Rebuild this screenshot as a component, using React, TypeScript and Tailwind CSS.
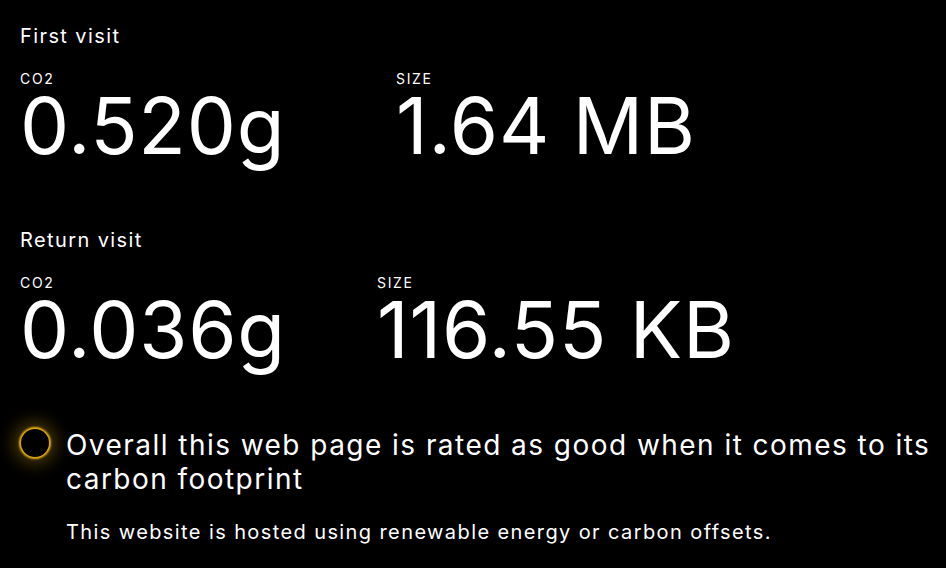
import React from 'react';

const font = { fontFamily: 'Inter, "Noto Sans", sans-serif' };

interface Metric {
  label: string;
  value: string;
  width?: string;
}

function Visit({ title, metrics, className }: { title: string; metrics: Metric[]; className?: string }) {
  return (
    <section className={className}>
      <h2 className="text-[20px] leading-7 tracking-[0.07em]">{title}</h2>
      <div className="mt-[21px] flex">
        {metrics.map((m) => (
          <div key={m.label} className={m.width}>
            <div className="text-[14px] leading-4 tracking-[0.12em] uppercase">{m.label}</div>
            <div className="text-[78px] leading-none tracking-[0.01em]">{m.value}</div>
          </div>
        ))}
      </div>
    </section>
  );
}

export default function App() {
  return (
    <div className="min-h-screen bg-black text-white pl-5 pr-2 pt-[22px]" style={font}>
      <Visit
        title="First visit"
        metrics={[
          { label: 'CO2', value: '0.520g', width: 'w-[376px]' },
          { label: 'SIZE', value: '1.64 MB' },
        ]}
      />
      <Visit
        className="mt-[61px]"
        title="Return visit"
        metrics={[
          { label: 'CO2', value: '0.036g', width: 'w-[357px]' },
          { label: 'SIZE', value: '116.55 KB' },
        ]}
      />

      {/* Rating */}
      <div className="mt-[59px] flex items-start gap-[17px]">
        <div className="ml-px mt-px h-[28px] w-[28px] shrink-0 rounded-full bg-black shadow-[0_0_2px_2px_#eab308,0_0_16px_8px_rgba(234,179,8,0.28)]" />
        <div>
          <p className="text-[28px] leading-[34px] tracking-[0.052em]">
            Overall this web page is rated as good when it comes to its carbon footprint
          </p>
          <p className="mt-[22px] text-[20px] leading-7 tracking-[0.07em]">
            This website is hosted using renewable energy or carbon offsets.
          </p>
        </div>
      </div>
    </div>
  );
}
